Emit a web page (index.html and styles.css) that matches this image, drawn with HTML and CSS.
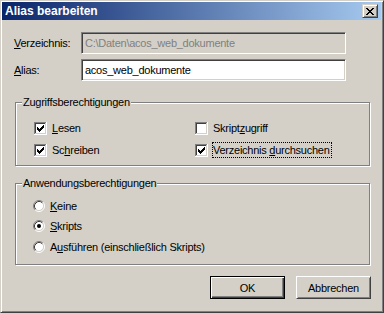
FILE: index.html
```html
<!DOCTYPE html>
<html lang="de">
<head>
<meta charset="utf-8">
<title>Alias bearbeiten</title>
<link rel="stylesheet" href="styles.css">
</head>
<body>
<div class="window">
  <div class="titlebar">
    <span class="title">Alias bearbeiten</span>
    <span class="close">
      <svg width="8" height="7" viewBox="0 0 8 7" shape-rendering="crispEdges">
        <path fill="#000" d="M0 0h2v1H0zM6 0h2v1H6zM1 1h2v1H1zM5 1h2v1H5zM2 2h4v1H2zM3 3h2v1H3zM2 4h4v1H2zM1 5h2v1H1zM5 5h2v1H5zM0 6h2v1H0zM6 6h2v1H6z"/>
      </svg>
    </span>
  </div>
  <div class="content">
    <div class="field">
      <span class="field-label"><u>V</u>erzeichnis:</span>
      <span class="edit disabled">C:\Daten\acos_web_dokumente</span>
    </div>
    <div class="field">
      <span class="field-label"><u>A</u>lias:</span>
      <span class="edit">acos_web_dokumente</span>
    </div>

    <div class="group group-access">
      <span class="legend">Zugriffsberechtigungen</span>
      <div class="check-grid">
        <div class="option">
          <svg class="box" width="13" height="13" viewBox="0 0 13 13" shape-rendering="crispEdges">
            <rect x="2" y="2" width="9" height="9" fill="#fff"/>
            <path fill="#808080" d="M0 0h12v1H1v11H0z"/>
            <path fill="#404040" d="M1 1h10v1H2v9H1z"/>
            <path fill="#fff" d="M12 0h1v13H0v-1h12z"/>
            <path fill="#d4d0c8" d="M11 1h1v11H1v-1h10z"/>
            <path fill="#000" d="M3 5h1v3H3zM4 6h1v3H4zM5 7h1v3H5zM6 6h1v3H6zM7 5h1v3H7zM8 4h1v3H8zM9 3h1v3H9z"/>
          </svg>
          <span class="opt-label"><u>L</u>esen</span>
        </div>
        <div class="option">
          <svg class="box" width="13" height="13" viewBox="0 0 13 13" shape-rendering="crispEdges">
            <rect x="2" y="2" width="9" height="9" fill="#fff"/>
            <path fill="#808080" d="M0 0h12v1H1v11H0z"/>
            <path fill="#404040" d="M1 1h10v1H2v9H1z"/>
            <path fill="#fff" d="M12 0h1v13H0v-1h12z"/>
            <path fill="#d4d0c8" d="M11 1h1v11H1v-1h10z"/>
          </svg>
          <span class="opt-label">Skript<u>z</u>ugriff</span>
        </div>
        <div class="option">
          <svg class="box" width="13" height="13" viewBox="0 0 13 13" shape-rendering="crispEdges">
            <rect x="2" y="2" width="9" height="9" fill="#fff"/>
            <path fill="#808080" d="M0 0h12v1H1v11H0z"/>
            <path fill="#404040" d="M1 1h10v1H2v9H1z"/>
            <path fill="#fff" d="M12 0h1v13H0v-1h12z"/>
            <path fill="#d4d0c8" d="M11 1h1v11H1v-1h10z"/>
            <path fill="#000" d="M3 5h1v3H3zM4 6h1v3H4zM5 7h1v3H5zM6 6h1v3H6zM7 5h1v3H7zM8 4h1v3H8zM9 3h1v3H9z"/>
          </svg>
          <span class="opt-label">Sc<u>h</u>reiben</span>
        </div>
        <div class="option">
          <svg class="box" width="13" height="13" viewBox="0 0 13 13" shape-rendering="crispEdges">
            <rect x="2" y="2" width="9" height="9" fill="#fff"/>
            <path fill="#808080" d="M0 0h12v1H1v11H0z"/>
            <path fill="#404040" d="M1 1h10v1H2v9H1z"/>
            <path fill="#fff" d="M12 0h1v13H0v-1h12z"/>
            <path fill="#d4d0c8" d="M11 1h1v11H1v-1h10z"/>
            <path fill="#000" d="M3 5h1v3H3zM4 6h1v3H4zM5 7h1v3H5zM6 6h1v3H6zM7 5h1v3H7zM8 4h1v3H8zM9 3h1v3H9z"/>
          </svg>
          <span class="opt-label focused">Verzeichnis <u>d</u>urchsuchen</span>
        </div>
      </div>
    </div>

    <div class="group group-app">
      <span class="legend">Anwendungsberechtigungen</span>
      <div class="radio-list">
        <div class="option">
          <svg class="radio" width="12" height="12" viewBox="0 0 12 12">
            <circle cx="6" cy="6" r="4.5" fill="#fff"/>
            <path d="M2.11 9.89A5.5 5.5 0 0 1 9.89 2.11" fill="none" stroke="#808080"/>
            <path d="M9.89 2.11A5.5 5.5 0 0 1 2.11 9.89" fill="none" stroke="#fff"/>
            <path d="M2.82 9.18A4.5 4.5 0 0 1 9.18 2.82" fill="none" stroke="#404040"/>
            <path d="M9.18 2.82A4.5 4.5 0 0 1 2.82 9.18" fill="none" stroke="#d4d0c8"/>
          </svg>
          <span class="opt-label"><u>K</u>eine</span>
        </div>
        <div class="option">
          <svg class="radio" width="12" height="12" viewBox="0 0 12 12">
            <circle cx="6" cy="6" r="4.5" fill="#fff"/>
            <path d="M2.11 9.89A5.5 5.5 0 0 1 9.89 2.11" fill="none" stroke="#808080"/>
            <path d="M9.89 2.11A5.5 5.5 0 0 1 2.11 9.89" fill="none" stroke="#fff"/>
            <path d="M2.82 9.18A4.5 4.5 0 0 1 9.18 2.82" fill="none" stroke="#404040"/>
            <path d="M9.18 2.82A4.5 4.5 0 0 1 2.82 9.18" fill="none" stroke="#d4d0c8"/>
            <circle cx="6" cy="6" r="2" fill="#000"/>
          </svg>
          <span class="opt-label"><u>S</u>kripts</span>
        </div>
        <div class="option">
          <svg class="radio" width="12" height="12" viewBox="0 0 12 12">
            <circle cx="6" cy="6" r="4.5" fill="#fff"/>
            <path d="M2.11 9.89A5.5 5.5 0 0 1 9.89 2.11" fill="none" stroke="#808080"/>
            <path d="M9.89 2.11A5.5 5.5 0 0 1 2.11 9.89" fill="none" stroke="#fff"/>
            <path d="M2.82 9.18A4.5 4.5 0 0 1 9.18 2.82" fill="none" stroke="#404040"/>
            <path d="M9.18 2.82A4.5 4.5 0 0 1 2.82 9.18" fill="none" stroke="#d4d0c8"/>
          </svg>
          <span class="opt-label">A<u>u</u>sführen (einschließlich Skripts)</span>
        </div>
      </div>
    </div>

    <div class="buttons">
      <span class="btn default">OK</span>
      <span class="btn">Abbrechen</span>
    </div>
  </div>
</div>
</body>
</html>
```
FILE: styles.css
```css
* { box-sizing: border-box; }
html, body { margin: 0; padding: 0; }
body {
  width: 384px;
  height: 313px;
  overflow: hidden;
  background: #d4d0c8;
  font-family: "Liberation Sans", Arial, sans-serif;
  font-size: 11px;
  letter-spacing: -0.25px;
  color: #000;
}
u { text-decoration: underline; text-underline-offset: 1px; }

.window {
  width: 384px;
  height: 313px;
  display: flex;
  flex-direction: column;
  background: #d4d0c8;
  border: 1px solid;
  border-color: #d4d0c8 #404040 #404040 #d4d0c8;
  box-shadow: inset 1px 1px #fff, inset -1px -1px #808080;
  padding: 1px 2px 2px 1px;
}

.titlebar {
  height: 18px;
  flex: none;
  display: flex;
  align-items: center;
  justify-content: space-between;
  padding: 0 3px 0 3px;
  background: linear-gradient(to right, #0a246a, #a6caf0);
}
.title {
  color: #fff;
  font-weight: bold;
  font-size: 12px;
  letter-spacing: 0;
}
.close {
  width: 16px;
  height: 14px;
  display: flex;
  align-items: center;
  justify-content: center;
  background: #d4d0c8;
  border: 1px solid;
  border-color: #d4d0c8 #404040 #404040 #d4d0c8;
  box-shadow: inset 1px 1px #fff, inset -1px -1px #808080;
}
.close svg { display: block; }

.content {
  flex: 1;
  display: flex;
  flex-direction: column;
  padding: 12px 11px 11px 13px;
}

.field {
  display: flex;
  align-items: center;
  height: 22px;
}
.field + .field { margin-top: 5px; }
.field-label {
  width: 66px;
  margin-left: -1px;
  margin-right: 1px;
}
.edit {
  width: 265px;
  height: 22px;
  display: flex;
  align-items: center;
  padding: 0 2px 0 3px;
  background: #fff;
  border: 1px solid;
  border-color: #808080 #fff #fff #808080;
  box-shadow: inset 1px 1px #404040, inset -1px -1px #d4d0c8;
  white-space: nowrap;
}
.edit.disabled {
  background: #d4d0c8;
  color: #808080;
}

.group {
  position: relative;
  width: 355px;
  border: 1px solid #808080;
  box-shadow: inset 1px 1px #fff, 1px 1px #fff;
}
.legend {
  position: absolute;
  top: -8px;
  left: 6px;
  padding: 0 1px;
  line-height: 14px;
  background: #d4d0c8;
}
.group-access {
  margin-top: 21px;
  height: 64px;
  padding: 17px 0 0 18px;
}
.group-app {
  margin-top: 17px;
  height: 82px;
  padding: 14px 0 0 17px;
}

.check-grid {
  display: grid;
  grid-template-columns: 161px 1fr;
  grid-auto-rows: 16px;
  row-gap: 6px;
}
.option {
  display: flex;
  align-items: center;
  height: 16px;
}
.box, .radio { display: block; flex: none; }
.opt-label {
  margin-left: 4px;
  padding: 0 1px 0 0;
  border: 1px dotted transparent;
  line-height: 14px;
  white-space: nowrap;
}
.opt-label.focused { border-color: #000; }
.radio + .opt-label { margin-left: 4px; }

.radio-list {
  display: flex;
  flex-direction: column;
  gap: 4px;
}
.radio-list .option:last-child { margin-top: 1px; }

.buttons {
  margin-top: 11px;
  margin-right: -1px;
  display: flex;
  justify-content: flex-end;
  gap: 11px;
}
.btn {
  width: 75px;
  height: 23px;
  display: flex;
  align-items: center;
  justify-content: center;
  background: #d4d0c8;
  border: 1px solid;
  border-color: #fff #404040 #404040 #fff;
  box-shadow: inset 1px 1px #d4d0c8, inset -1px -1px #808080;
}
.btn.default {
  border-color: #000;
  box-shadow: inset 1px 1px #fff, inset -1px -1px #404040, inset -2px -2px #808080;
}
```
